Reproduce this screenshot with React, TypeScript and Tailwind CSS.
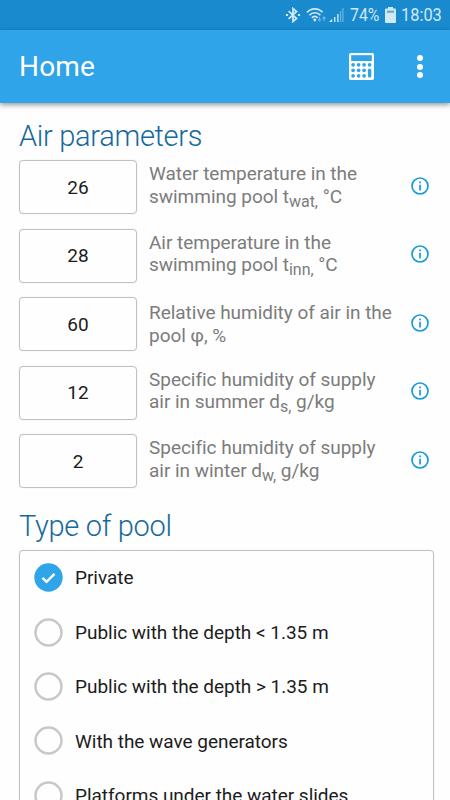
import React, { useState } from "react";

const params = [
  { value: "26", first: "Water temperature in the", second: "swimming pool t", sub: "wat,", unit: " °C" },
  { value: "28", first: "Air temperature in the", second: "swimming pool t", sub: "inn,", unit: " °C" },
  { value: "60", first: "Relative humidity of air in the", second: "pool φ, %", sub: "", unit: "" },
  { value: "12", first: "Specific humidity of supply", second: "air in summer d", sub: "s,", unit: " g/kg" },
  { value: "2", first: "Specific humidity of supply", second: "air in winter d", sub: "w,", unit: " g/kg" },
];

const poolTypes = [
  "Private",
  "Public with the depth < 1.35 m",
  "Public with the depth > 1.35 m",
  "With the wave generators",
  "Platforms under the water slides",
];

function StatusBar() {
  return (
    <div className="flex h-[30px] shrink-0 items-center justify-end bg-[#198ace] pr-2 text-[#d0e8f7]">
      <svg className="mr-[5px] h-4 w-4" viewBox="0 0 16 16" fill="none" stroke="currentColor" strokeWidth="1.8">
        <path d="M3.6 4.2l7.9 7.2L8 14.4V1.6l3.5 3L3.6 11.8" />
        <path d="M.9 8h2.2M12.9 8h2.2" strokeWidth="2.2" />
      </svg>
      <svg className="mr-[2px] h-4 w-[21px]" viewBox="0 0 21 16" fill="none" stroke="currentColor" strokeWidth="1.7">
        <path d="M1 5.3C5.4.6 12.4.6 16.6 5.3M3.4 8.2c3-3.3 8-3.3 11 0M5.9 10.8c1.7-1.8 4.1-1.8 5.8 0" />
        <circle cx="8.8" cy="13" r="1.4" fill="currentColor" stroke="none" />
        <path d="M13.5 10v4M12 12.4l1.5 1.5 1.5-1.5M18 14v-4M16.5 11.6L18 10l1.5 1.6" strokeWidth="1.2" opacity=".45" />
      </svg>
      <svg className="mr-[6px] h-4 w-[15px]" viewBox="0 0 15 16" fill="currentColor">
        <path d="M0 15l3.2-3.2V15zM5 10h1.4v5H5z" />
        <path d="M8.2 7h1.4v8H8.2z" />
        <path d="M11 4h1.2v11H11zM13.3 1h1.2v14h-1.2z" opacity=".45" />
      </svg>
      <span className="mr-[5px] w-[30px] origin-left scale-x-[.88] whitespace-nowrap text-[18px] leading-[30px]">74%</span>
      <svg className="mr-[5px] h-4 w-[11px]" viewBox="0 0 11 16" fill="currentColor">
        <path d="M3 0h5v1.6h2q1 0 1 1V15q0 1-1 1H1q-1 0-1-1V2.6q0-1 1-1h2z" />
        <path d="M2 3.6h7v2.2H2z" fill="#62abdc" />
      </svg>
      <span className="w-[41px] origin-left scale-x-[.91] whitespace-nowrap text-[18px] leading-[30px]">18:03</span>
    </div>
  );
}

function CalculatorIcon() {
  return (
    <svg className="h-[27px] w-[25px]" viewBox="0 0 25 27">
      <rect width="25" height="27" rx="1.8" fill="#fff" />
      <g fill="#30a4e8">
        <rect x="2.2" y="2.2" width="20.6" height="5.8" />
        {[11.8, 17.3, 22.8].map((y) =>
          [4.1, 9.6, 15.1].map((x) => <circle key={x + "-" + y} cx={x} cy={y} r="1.85" />)
        )}
        <circle cx="20.6" cy="11.8" r="1.85" />
        <rect x="18.9" y="15.6" width="3.4" height="9" rx="1.7" />
      </g>
    </svg>
  );
}

function InfoIcon() {
  return (
    <svg className="h-[18px] w-[18px]" viewBox="0 0 18 18">
      <circle cx="9" cy="9" r="8" fill="none" stroke="#189bdc" strokeWidth="1.7" />
      <path d="M8.2 4.5h1.7v1.7H8.2zM8.2 7.8h1.7v5.6H8.2z" fill="#189bdc" />
    </svg>
  );
}

function Radio({ checked }: { checked: boolean }) {
  return (
    <svg className="h-[29px] w-[29px] shrink-0" viewBox="0 0 29 29" fill="none">
      {checked ? (
        <>
          <circle cx="14.5" cy="14.5" r="14.2" fill="#30a4e8" />
          <path d="M8.5 14.8l4 4 8-8" stroke="#fff" strokeWidth="2.4" />
        </>
      ) : (
        <circle cx="14.5" cy="14.5" r="13" stroke="#c8c8c8" strokeWidth="2.5" />
      )}
    </svg>
  );
}

export default function App() {
  const [selected, setSelected] = useState(0);

  return (
    <div className="flex h-[800px] w-[450px] flex-col overflow-hidden bg-[#fefefe] font-[Roboto,sans-serif]">
      <StatusBar />
      <header className="z-10 flex h-[73px] shrink-0 items-center bg-[#30a4e8] pl-[19px] pr-[27px] text-white shadow-[0_2px_5px_rgba(0,0,0,0.4)]">
        <h1 className="flex-1 text-[28px] tracking-[0.2px]">Home</h1>
        <button className="mr-[43px]">
          <CalculatorIcon />
        </button>
        <button className="flex w-[6px] flex-col gap-[2.5px]">
          <span className="h-[6px] w-[6px] rounded-full bg-white" />
          <span className="h-[6px] w-[6px] rounded-full bg-white" />
          <span className="h-[6px] w-[6px] rounded-full bg-white" />
        </button>
      </header>

      <main className="flex-1 overflow-hidden px-[19px]">
        <h2 className="mt-[15px] h-[42px] text-[29px] font-light leading-9 tracking-[-0.3px] text-[#16699c]">Air parameters</h2>
        {params.map((p, i) => (
          <div key={i} className="flex h-[68.5px] items-start">
            <input
              className="h-[54px] w-[118px] rounded-[4px] border border-[#c0c0c0] text-center text-[19px] text-[#1c1c1c] shadow-[0_0_1px_#c8c8c8]"
              defaultValue={p.value}
            />
            <div className="flex h-[54px] flex-1 items-center pl-3">
              <p className={p.sub ? "pb-[2.5px] text-[19px] leading-[22.5px] tracking-[-0.03px] text-[#7c7c7c]" : "pt-px text-[19px] leading-[22.5px] tracking-[-0.03px] text-[#7c7c7c]"}>
                {p.first}
                <br />
                {p.second}
                {p.sub && <span className="relative top-[4px] text-[16px] leading-none">{p.sub}</span>}
                {p.unit}
              </p>
            </div>
            <button className="mr-[2px] flex h-[51px] items-center">
              <InfoIcon />
            </button>
          </div>
        ))}

        <h2 className="mt-[5px] h-[42px] text-[29px] font-light leading-9 tracking-[-0.3px] text-[#16699c]">Type of pool</h2>
        <div className="h-[300px] w-[415px] rounded-[4px] border border-[#c0c0c0] shadow-[0_0_1px_#c8c8c8]">
          {poolTypes.map((name, i) => (
            <button
              key={name}
              className="flex h-[54.4px] w-full items-center pl-[14px] text-[19px] tracking-[-0.03px] text-[#1c1c1c]"
              onClick={() => setSelected(i)}
            >
              <Radio checked={selected === i} />
              <span className="ml-3 pt-[2px]">{name}</span>
            </button>
          ))}
        </div>
      </main>
    </div>
  );
}
